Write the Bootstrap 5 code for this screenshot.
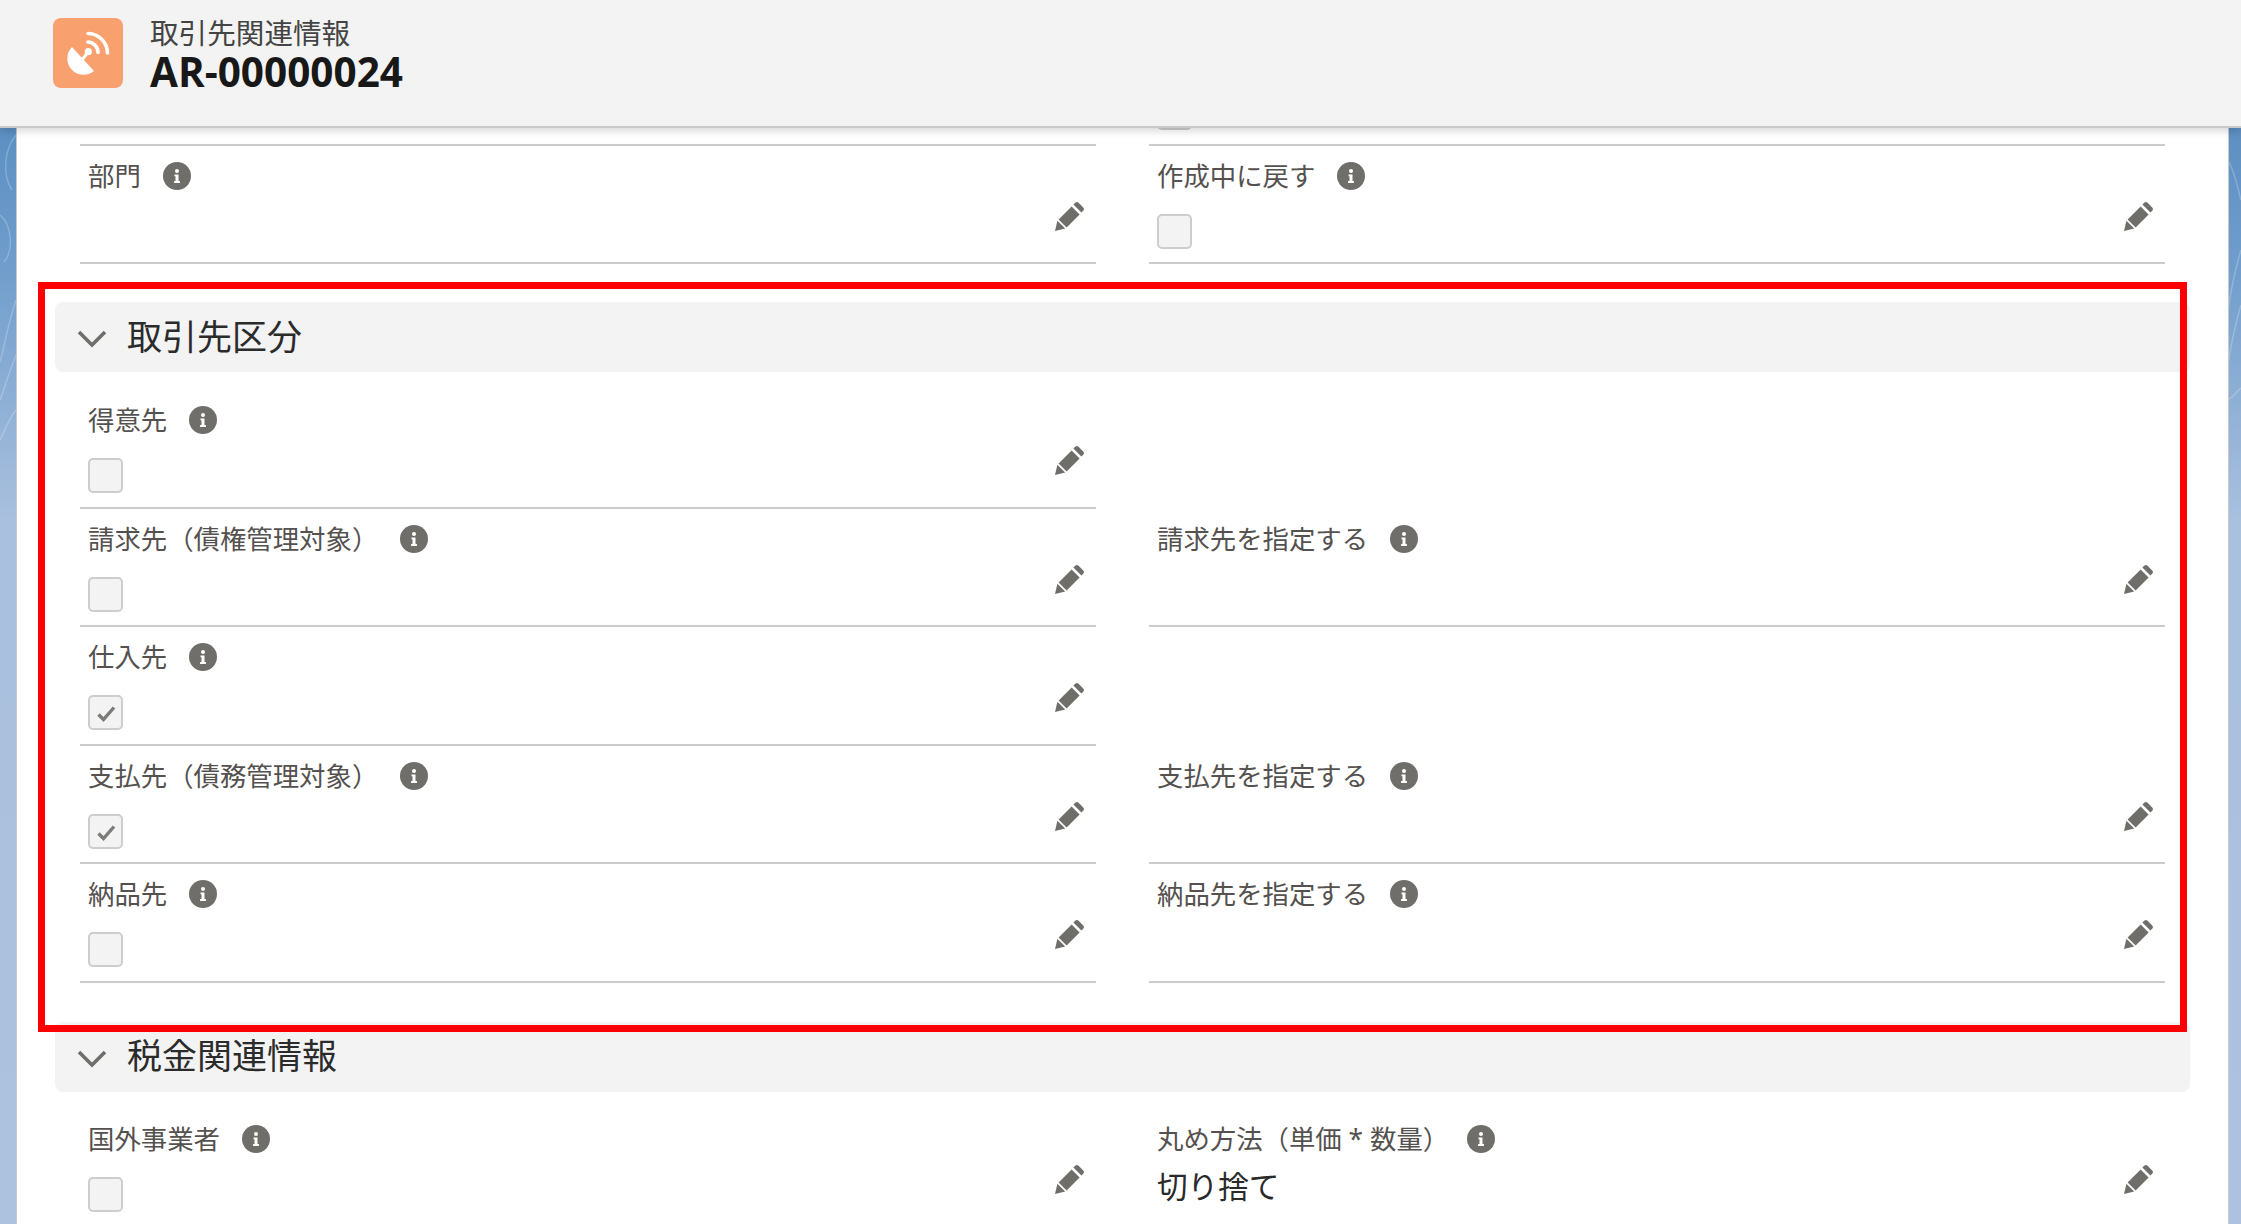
<!DOCTYPE html>
<html lang="ja">
<head>
<meta charset="utf-8">
<title>取引先関連情報 AR-00000024</title>
<link rel="stylesheet" href="https://cdn.jsdelivr.net/npm/bootstrap@5.3.0/dist/css/bootstrap.min.css">
<style>
html,body{height:1224px;overflow:hidden}
body{position:relative;font-family:"Noto Sans","Noto Sans CJK JP",sans-serif;background:linear-gradient(180deg,#4b83ba 0,#6f9ccb 260px,#a9c0de 520px,#adc2de 1224px);color:#3e3e3c}
.bg-swirl{position:absolute;left:0;top:0;z-index:-1}
.rec-head{position:relative;z-index:5;height:128px;background:#f3f3f3;border-bottom:2px solid #c9c9c9;box-shadow:0 3px 8px rgba(0,0,0,.16);padding:18px 0 0 53px;gap:27px}
.rec-icon{width:70px;height:70px;border-radius:8px;background:#f9a06f;flex:none}
.rec-kind{font-size:28.6px;line-height:36px;margin-top:-3px;color:#444}
.rec-name{font-size:40.500px;line-height:42px;font-weight:700;color:#181818;font-family:"Open Sans","Noto Sans CJK JP",sans-serif}
.sheet{margin:-101px 13px 0 17px;height:1197px;overflow:hidden;background:#fff;box-shadow:-1px 0 0 #c9c9c9,1px 0 0 #c9c9c9;padding:0 38px}
.grid-rows{padding:0 25px}
.grid-rows .row{--bs-gutter-x:53px;--bs-gutter-y:0}
.fld{height:118.5px;padding:0 11px 0 8px}
.fld-line{border-bottom:2px solid #cbcbcb}
.fld-label{font-size:26.4px;line-height:36px;padding-top:12px;color:#54514f;box-sizing:content-box;gap:22px;white-space:nowrap}
.fld-label svg{width:28px;height:28px;flex:none}
.fld-label.tight{gap:18px}
.chk{width:35px;height:35px;margin-top:20px;background:#f3f3f3;border:2px solid #cdcdcd;border-radius:5px}
.chk svg{width:31px;height:31px;display:block}
.fld-value{font-size:30.6px;line-height:42px;margin-top:8px;color:#2a2a2a}
.pen{width:31px;height:31px;flex:none;margin-bottom:30.5px}
.sec-head{height:70px;background:#f3f3f3;border-radius:8px;padding-left:22px;gap:20px;font-size:35px;color:#2b2b2b}
.sec-head svg{width:30px;height:18px;flex:none;margin-top:4px}
.sec-gap{margin-top:38px;margin-bottom:18px}
.sec-gap.later{margin-top:39px;margin-bottom:17px}
.red-frame{position:absolute;left:38px;top:282px;width:2149px;height:750px;border:7px solid #f00;z-index:4;pointer-events:none}
</style>
</head>
<body>
<svg class="bg-swirl" width="2241" height="1224" fill="none" stroke="#fff" stroke-opacity=".22" stroke-width="1.500">
  <path d="M16 135C4 150 2 175 12 190"/><path d="M0 215C12 225 14 250 4 262"/><path d="M16 300C6 330 4 350 0 362"/><path d="M16 355C8 375 4 390 0 400"/><path d="M16 410C8 420 4 432 0 440"/>
  <path d="M2228 160C2236 175 2238 190 2241 200"/><path d="M2241 250C2235 270 2231 290 2228 310"/><path d="M2241 305C2235 325 2231 345 2228 365"/><path d="M2228 400C2236 395 2238 390 2241 388"/>
</svg>
<svg width="0" height="0" class="position-absolute">
  <symbol id="i-info" viewBox="0 0 28 28"><circle cx="14" cy="14" r="14" fill="#706e6b"/><circle cx="14" cy="9" r="2" fill="#fff"/><path d="M11.500 12.400h4v6.600h1.400v1.900h-5.800v-1.900h1.400v-4.700h-1z" fill="#fff"/></symbol>
  <symbol id="i-pen" viewBox="0 0 31 31"><g fill="#706e6b"><path d="M1 30l2.400-10.200 7.800 7.800z"/><path d="M4.600 18.400L17.600 5.400l8 8-13 13z"/><path d="M19.400 3.600l1.800-1.800c1-1 2.400-1 3.400 0l4.600 4.600c1 1 1 2.400 0 3.400l-1.800 1.800z"/></g></symbol>
  <symbol id="i-check" viewBox="0 0 31 31"><path d="M8.500 17.500l5 5L24 10.500" fill="none" stroke="#7d7b78" stroke-width="3.400"/></symbol>
  <symbol id="i-chev" viewBox="0 0 30 18"><path d="M2 2l13 13L28 2" fill="none" stroke="#706e6b" stroke-width="3.600"/></symbol>
</svg>

<header class="rec-head d-flex align-items-start">
  <div class="rec-icon">
    <svg viewBox="0 0 70 70" width="70" height="70">
      <g fill="#fff"><path d="M19 29A16.300 16.300 0 0 0 41 53Z"/><circle cx="35.300" cy="33.700" r="3.600"/></g>
      <path d="M29 42l6-8" stroke="#fff" stroke-width="3"/>
      <g fill="none" stroke="#fff" stroke-width="3.600" stroke-linecap="round"><path d="M35 24A10.500 10.500 0 0 1 45 34.500"/><path d="M35 15.500A19.800 19.800 0 0 1 54.500 35"/></g>
    </svg>
  </div>
  <div>
    <div class="rec-kind">取引先関連情報</div>
    <div class="rec-name">AR-00000024</div>
  </div>
</header>

<main class="sheet">
  <div class="grid-rows">
    <div class="row">
      <div class="col-6"><div class="fld fld-line"></div></div>
      <div class="col-6"><div class="fld fld-line d-flex justify-content-between align-items-end"><div class="align-self-start"><div class="fld-label d-flex align-items-center">&nbsp;</div><div class="chk"></div></div></div></div>
    </div>
    <div class="row">
      <div class="col-6"><div class="fld fld-line d-flex justify-content-between align-items-end"><div class="align-self-start"><div class="fld-label d-flex align-items-center">部門<svg><use href="#i-info"/></svg></div></div><svg class="pen"><use href="#i-pen"/></svg></div></div>
      <div class="col-6"><div class="fld fld-line d-flex justify-content-between align-items-end"><div class="align-self-start"><div class="fld-label d-flex align-items-center">作成中に戻す<svg><use href="#i-info"/></svg></div><div class="chk"></div></div><svg class="pen"><use href="#i-pen"/></svg></div></div>
    </div>
  </div>

  <div class="sec-head sec-gap d-flex align-items-center"><svg><use href="#i-chev"/></svg>取引先区分</div>
  <div class="grid-rows">
    <div class="row">
      <div class="col-6"><div class="fld fld-line d-flex justify-content-between align-items-end"><div class="align-self-start"><div class="fld-label d-flex align-items-center">得意先<svg><use href="#i-info"/></svg></div><div class="chk"></div></div><svg class="pen"><use href="#i-pen"/></svg></div></div>
      <div class="col-6"></div>
    </div>
    <div class="row">
      <div class="col-6"><div class="fld fld-line d-flex justify-content-between align-items-end"><div class="align-self-start"><div class="fld-label d-flex align-items-center">請求先（債権管理対象）<svg><use href="#i-info"/></svg></div><div class="chk"></div></div><svg class="pen"><use href="#i-pen"/></svg></div></div>
      <div class="col-6"><div class="fld fld-line d-flex justify-content-between align-items-end"><div class="align-self-start"><div class="fld-label d-flex align-items-center">請求先を指定する<svg><use href="#i-info"/></svg></div></div><svg class="pen"><use href="#i-pen"/></svg></div></div>
    </div>
    <div class="row">
      <div class="col-6"><div class="fld fld-line d-flex justify-content-between align-items-end"><div class="align-self-start"><div class="fld-label d-flex align-items-center">仕入先<svg><use href="#i-info"/></svg></div><div class="chk"><svg><use href="#i-check"/></svg></div></div><svg class="pen"><use href="#i-pen"/></svg></div></div>
      <div class="col-6"></div>
    </div>
    <div class="row">
      <div class="col-6"><div class="fld fld-line d-flex justify-content-between align-items-end"><div class="align-self-start"><div class="fld-label d-flex align-items-center">支払先（債務管理対象）<svg><use href="#i-info"/></svg></div><div class="chk"><svg><use href="#i-check"/></svg></div></div><svg class="pen"><use href="#i-pen"/></svg></div></div>
      <div class="col-6"><div class="fld fld-line d-flex justify-content-between align-items-end"><div class="align-self-start"><div class="fld-label d-flex align-items-center">支払先を指定する<svg><use href="#i-info"/></svg></div></div><svg class="pen"><use href="#i-pen"/></svg></div></div>
    </div>
    <div class="row">
      <div class="col-6"><div class="fld fld-line d-flex justify-content-between align-items-end"><div class="align-self-start"><div class="fld-label d-flex align-items-center">納品先<svg><use href="#i-info"/></svg></div><div class="chk"></div></div><svg class="pen"><use href="#i-pen"/></svg></div></div>
      <div class="col-6"><div class="fld fld-line d-flex justify-content-between align-items-end"><div class="align-self-start"><div class="fld-label d-flex align-items-center">納品先を指定する<svg><use href="#i-info"/></svg></div></div><svg class="pen"><use href="#i-pen"/></svg></div></div>
    </div>
  </div>

  <div class="sec-head sec-gap later d-flex align-items-center"><svg><use href="#i-chev"/></svg>税金関連情報</div>
  <div class="grid-rows">
    <div class="row">
      <div class="col-6"><div class="fld fld-line d-flex justify-content-between align-items-end"><div class="align-self-start"><div class="fld-label d-flex align-items-center">国外事業者<svg><use href="#i-info"/></svg></div><div class="chk"></div></div><svg class="pen"><use href="#i-pen"/></svg></div></div>
      <div class="col-6"><div class="fld fld-line d-flex justify-content-between align-items-end"><div class="align-self-start"><div class="fld-label tight d-flex align-items-center">丸め方法（単価 * 数量）<svg><use href="#i-info"/></svg></div><div class="fld-value">切り捨て</div></div><svg class="pen"><use href="#i-pen"/></svg></div></div>
    </div>
  </div>
</main>

<div class="red-frame"></div>
<script src="https://cdn.jsdelivr.net/npm/bootstrap@5.3.0/dist/js/bootstrap.bundle.min.js"></script>
</body>
</html>
